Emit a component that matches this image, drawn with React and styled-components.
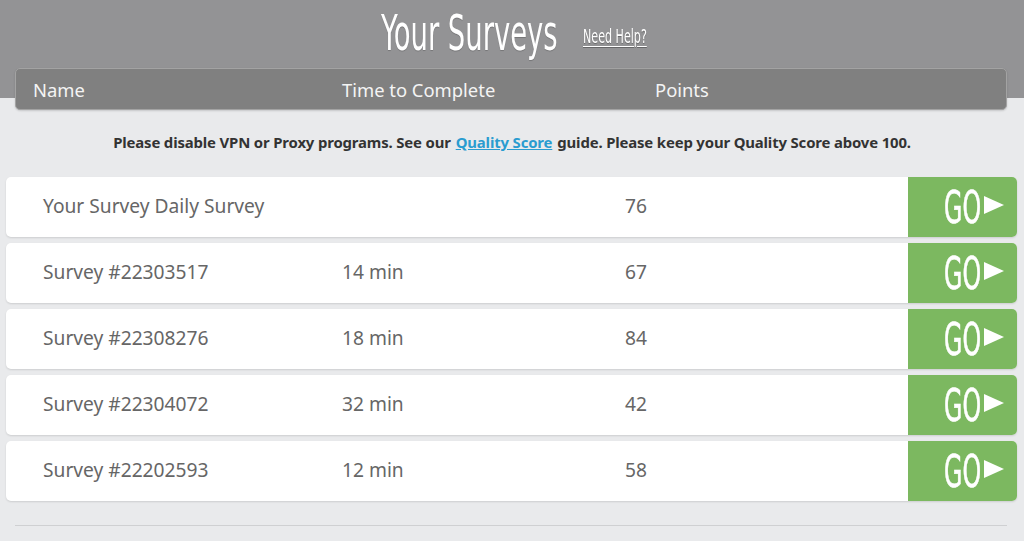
import * as React from "react"
import styled, { createGlobalStyle } from "styled-components"

const GlobalStyle = createGlobalStyle`
  html, body {
    margin: 0;
    padding: 0;
    background: #e9eaec;
    font-family: "Open Sans", Lato, "Liberation Sans", sans-serif;
  }
`

const Page = styled.div`
  width: 1024px;
  height: 541px;
  overflow: hidden;
  background: linear-gradient(#939395 0, #939395 98px, #e9eaec 98px);
`

const TitleRow = styled.div`
  height: 68px;
  display: flex;
  align-items: center;
  justify-content: center;
  padding-left: 2px;
  box-sizing: border-box;
`

// fixed-width box with a horizontally squeezed face inside, to mimic the condensed display font
const Squeeze = styled.span`
  display: inline-block;
  width: ${(p) => p.$w}px;
  white-space: nowrap;
  overflow: visible;

  & > span {
    display: inline-block;
    font-family: "Liberation Sans Narrow", "DejaVu Sans Condensed", "Liberation Sans", sans-serif;
    transform: scaleX(${(p) => p.$squeeze});
    transform-origin: left center;
  }
`

const Title = styled(Squeeze)`
  color: #fff;
  font-size: 50px;
  line-height: 1;
  margin-top: -4px;
  text-shadow: 0 1px 1px rgba(0, 0, 0, 0.2);
`

const Help = styled(Squeeze)`
  color: #fff;
  font-size: 19px;
  margin-left: 26px;
  margin-top: 4px;
  text-shadow: 0 1px 1px rgba(0, 0, 0, 0.3);

  & > span {
    text-decoration: underline;
    text-underline-offset: 3px;
  }
`

const HeaderBar = styled.div`
  margin: 0 17px 0 15px;
  height: 42px;
  background: #808080;
  border-radius: 5px;
  border: 1px solid #a3a3a3;
  box-shadow: 0 1px 2px rgba(0, 0, 0, 0.15);
  box-sizing: border-box;
  display: grid;
  grid-template-columns: 309px 313px 1fr;
  align-items: center;
  padding: 0 0 0 17px;
  color: #f4f4f4;
  font-size: 18.4px;
  font-family: "Noto Sans", "Open Sans", sans-serif;
`

const Notice = styled.p`
  margin: 0;
  height: 67px;
  padding-bottom: 3px;
  box-sizing: border-box;
  display: flex;
  align-items: center;
  justify-content: center;
  font-family: "Noto Sans", "Open Sans", sans-serif;
  font-weight: 700;
  font-size: 14.9px;
  color: #333;
  letter-spacing: -0.15px;

  a {
    color: #2a9cd0;
    text-decoration: underline;
    margin: 0 5px;
  }
`

const List = styled.div`
  display: flex;
  flex-direction: column;
  gap: 6px;
  margin: 0 7px 0 6px;
`

const Row = styled.div`
  height: 60px;
  background: #fff;
  border-radius: 5px;
  box-shadow: 0 1px 2px rgba(0, 0, 0, 0.12);
  display: flex;
  align-items: center;
  overflow: hidden;
  font-family: "Noto Sans", "Open Sans", sans-serif;
  font-size: 19.2px;
  color: #666;
`

const Cell = styled.div`
  width: ${(p) => p.$w}px;
  flex-shrink: 0;
  margin-top: -3px;
`

const Go = styled.button`
  margin-left: auto;
  width: 109px;
  height: 100%;
  border: 0;
  padding: 0 0 0 36px;
  background: #7cb860;
  color: #fff;
  display: flex;
  align-items: center;
  cursor: pointer;
`

const GoText = styled(Squeeze)`
  font-size: 44px;
  line-height: 1;
  margin-top: 2px;
  -webkit-text-stroke: 0.6px #fff;
`

const Arrow = styled.svg`
  margin-left: 3px;
  margin-top: -5px;
`

const Divider = styled.hr`
  margin: 24px 17px 0 15px;
  border: 0;
  border-top: 1px solid #cfd0d2;
`

const surveys = [
  { name: "Your Survey Daily Survey", time: "", points: 76 },
  { name: "Survey #22303517", time: "14 min", points: 67 },
  { name: "Survey #22308276", time: "18 min", points: 84 },
  { name: "Survey #22304072", time: "32 min", points: 42 },
  { name: "Survey #22202593", time: "12 min", points: 58 },
]

export default function App() {
  return (
    <Page>
      <GlobalStyle />
      <TitleRow>
        <Title $w={176} $squeeze={0.61}>
          <span>Your Surveys</span>
        </Title>
        <Help $w={63} $squeeze={0.65}>
          <span>Need Help?</span>
        </Help>
      </TitleRow>
      <HeaderBar>
        <span>Name</span>
        <span>Time to Complete</span>
        <span>Points</span>
      </HeaderBar>
      <Notice>
        Please disable VPN or Proxy programs. See our<a href="#">Quality Score</a>guide. Please keep your Quality Score above 100.
      </Notice>
      <List>
        {surveys.map((s) => (
          <Row key={s.name}>
            <Cell $w={37} />
            <Cell $w={299}>{s.name}</Cell>
            <Cell $w={283}>{s.time}</Cell>
            <Cell $w={60}>{s.points}</Cell>
            <Go>
              <GoText $w={37} $squeeze={0.6}>
                <span>GO</span>
              </GoText>
              <Arrow width="20" height="18" viewBox="0 0 20 18">
                <path d="M0 0 L20 9 L0 18 Z" fill="#fff" />
              </Arrow>
            </Go>
          </Row>
        ))}
      </List>
      <Divider />
    </Page>
  )
}
